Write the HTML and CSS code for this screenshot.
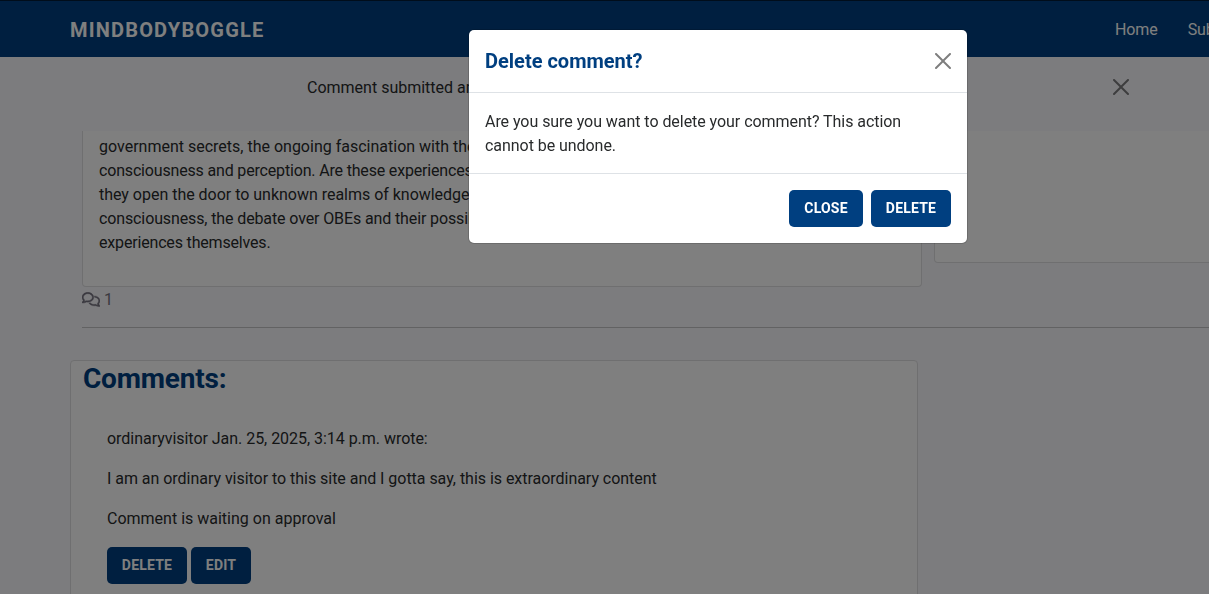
FILE: index.html
```html
<!DOCTYPE html>
<html lang="en">
<head>
<meta charset="utf-8">
<title>MindBodyBoggle</title>
<link rel="stylesheet" href="styles.css">
</head>
<body>
<header class="navbar">
  <a class="brand">MINDBODYBOGGLE</a>
  <nav class="nav"><a>Home</a><a>Submit</a></nav>
</header>
<div class="alert">
  <span class="alert-text">Comment submitted and awaiting approval</span>
  <svg class="close" viewBox="0 0 16 16"><path d="M.293.293a1 1 0 0 1 1.414 0L8 6.586 14.293.293a1 1 0 1 1 1.414 1.414L9.414 8l6.293 6.293a1 1 0 0 1-1.414 1.414L8 9.414l-6.293 6.293a1 1 0 0 1-1.414-1.414L6.586 8 .293 1.707a1 1 0 0 1 0-1.414z"/></svg>
</div>
<main>
  <div class="post-row">
    <article class="card post">
      <p>government secrets, the ongoing fascination with the</p>
      <p class="tight">consciousness and perception. Are these experiences</p>
      <p class="snug">they open the door to unknown realms of knowledge</p>
      <p class="close-set">consciousness, the debate over OBEs and their possibilities</p>
      <p class="tight">experiences themselves.</p>
    </article>
    <aside class="card side"></aside>
  </div>
  <div class="count">
    <svg class="comments-icon" viewBox="0 0 640 512"><path d="M88.2 309.1c9.8-18.3 6.8-40.8-7.5-55.8C59.4 230.9 48 204 48 176c0-63.5 63.8-128 160-128s160 64.5 160 128s-63.8 128-160 128c-13.1 0-25.8-1.3-37.8-3.6c-10.4-2-21.2-.6-30.7 4.2c-4.1 2.1-8.3 4.1-12.6 6c-16 7.2-32.9 13.5-49.9 18c2.8-4.6 5.4-9.1 7.9-13.6c1.1-1.9 2.2-3.9 3.2-5.9zM208 352c114.9 0 208-78.8 208-176S322.9 0 208 0S0 78.8 0 176c0 41.8 17.2 80.1 45.9 110.3c-.9 1.7-1.9 3.5-2.8 5.1c-10.3 18.4-22.3 36.5-36.6 52.1c-6.6 7-8.3 17.2-4.6 25.9C5.8 378.3 14.4 384 24 384c43 0 86.5-13.3 122.7-29.7c4.8-2.2 9.6-4.5 14.2-6.8c15.1 3 30.9 4.5 47.1 4.5zM432 480c16.2 0 31.9-1.6 47.1-4.5c4.6 2.3 9.4 4.6 14.2 6.8C529.5 498.7 573 512 616 512c9.6 0 18.2-5.7 22-14.5c3.8-8.8 2-19-4.6-25.9c-14.2-15.6-26.2-33.7-36.6-52.1c-.9-1.7-1.9-3.4-2.8-5.1C622.8 384.1 640 345.8 640 304c0-94.4-87.9-171.5-198.2-175.8c4.1 15.2 6.2 31.2 6.2 47.8l0 .6c87.2 6.7 144 67.5 144 127.4c0 28-11.4 54.9-32.7 77.2c-14.3 15-17.3 37.6-7.5 55.8c1.1 2 2.2 4 3.2 5.9c2.5 4.5 5.2 9 7.9 13.6c-17-4.5-33.9-10.7-49.9-18c-4.3-1.9-8.5-3.9-12.6-6c-9.5-4.8-20.3-6.2-30.7-4.2c-12.1 2.4-24.7 3.6-37.8 3.6c-61.7 0-110-26.5-136.8-62.3c-16 5.4-32.8 9.4-50 11.8C279 439.8 350 480 432 480z"/></svg>
    <span>1</span>
  </div>
  <hr class="rule">
  <section class="card comments">
    <h3>Comments:</h3>
    <div class="comment">
      <p>ordinaryvisitor Jan. 25, 2025, 3:14 p.m. wrote:</p>
      <p>I am an ordinary visitor to this site and I gotta say, this is extraordinary content</p>
      <p class="status">Comment is waiting on approval</p>
      <div class="actions"><button class="btn btn-delete">DELETE</button><button class="btn btn-edit">EDIT</button></div>
    </div>
  </section>
</main>
<div class="backdrop">
  <div class="modal">
    <div class="modal-header">
      <h5>Delete comment?</h5>
      <svg class="close" viewBox="0 0 16 16"><path d="M.293.293a1 1 0 0 1 1.414 0L8 6.586 14.293.293a1 1 0 1 1 1.414 1.414L9.414 8l6.293 6.293a1 1 0 0 1-1.414 1.414L8 9.414l-6.293 6.293a1 1 0 0 1-1.414-1.414L6.586 8 .293 1.707a1 1 0 0 1 0-1.414z"/></svg>
    </div>
    <p class="modal-body">Are you sure you want to delete your comment? This action cannot be undone.</p>
    <div class="modal-footer"><button class="btn btn-close">CLOSE</button><button class="btn btn-delete">DELETE</button></div>
  </div>
</div>
</body>
</html>
```
FILE: styles.css
```css
* { box-sizing: border-box; }
html, body { height: 100%; }
body {
  margin: 0;
  overflow: hidden;
  background: #f8f8fc;
  color: #292b2c;
  font: 16px/24px Roboto, sans-serif;
}
p, h3, h5 { margin: 0; }
.navbar {
  display: flex;
  align-items: center;
  justify-content: space-between;
  height: 57px;
  padding: 1px 0 0 70px;
  border-top: 1px solid #001a36;
  background: #003f80;
  color: #fff;
  overflow: hidden;
}
.brand { font-size: 20px; font-weight: 700; letter-spacing: 1.18px; }
.nav { display: flex; gap: 30px; width: 94px; flex-shrink: 0; white-space: nowrap; letter-spacing: -.1px; }
.alert {
  display: flex;
  justify-content: space-between;
  align-items: center;
  height: 74px;
  padding: 0 80px 14px 307px;
}
.alert-text { padding-top: 2px; }
.close { width: 16px; height: 16px; opacity: .5; fill: #000; }
.card { background: #fff; border: 1px solid #dfdfe1; border-radius: 4px; }
.post-row { display: flex; gap: 12px; align-items: flex-start; padding-left: 82px; }
.post {
  flex: 0 0 840px;
  height: 156px;
  padding: 4px 16px;
  border-top: 0;
  border-radius: 0 0 4px 4px;
  white-space: nowrap;
}
.tight { letter-spacing: -.17px; }
.close-set { letter-spacing: -.12px; }
.snug { letter-spacing: -.02px; }
.side { flex: 0 0 420px; height: 132px; border-top: 0; border-radius: 0 0 4px 4px; }
.count {
  display: flex;
  align-items: center;
  gap: 4px;
  height: 25px;
  padding-left: 82px;
  color: #75727f;
}
.comments-icon { width: 18px; height: 15px; fill: #75727f; stroke: #75727f; stroke-width: 14px; }
.rule { margin: 15px 0 32px 82px; border: 0; height: 1px; background: #c4c4c7; }
.comments { width: 848px; height: 280px; margin-left: 70px; padding: 1px 12px 0; }
.comments h3 { font-size: 28px; font-weight: 700; line-height: 34px; letter-spacing: -.2px; color: #003f80; }
.comment { display: flex; flex-direction: column; gap: 16px; padding: 31px 24px; letter-spacing: -.035px; }
.status { letter-spacing: 0; }
.actions { display: flex; gap: 4px; }
.btn {
  height: 37px;
  padding: 0;
  border: 0;
  border-radius: 5px;
  background: #003f80;
  color: #fff;
  font: 700 14px/21px Roboto, sans-serif;
  letter-spacing: .2px;
}
.btn-delete { width: 80px; }
.btn-edit { width: 60px; }
.btn-close { width: 74px; }
.backdrop {
  position: fixed;
  inset: 0;
  padding: 30px 0 0 469px;
  background: rgba(0, 0, 0, .5);
}
.modal { width: 498px; height: 213px; background: #fff; border-radius: 5px; box-shadow: 0 0 0 1px rgba(0, 0, 0, .15); }
.modal-header {
  display: flex;
  align-items: center;
  justify-content: space-between;
  height: 63px;
  padding: 0 16px;
  border-bottom: 1px solid #dee2e6;
}
.modal-header h5 { font-size: 20px; font-weight: 700; line-height: 30px; color: #003f80; }
.modal-body { height: 80px; padding: 17px 16px 15px; letter-spacing: -.05px; }
.modal-footer {
  display: flex;
  justify-content: flex-end;
  gap: 8px;
  padding: 16px;
  border-top: 1px solid #dee2e6;
}
```
